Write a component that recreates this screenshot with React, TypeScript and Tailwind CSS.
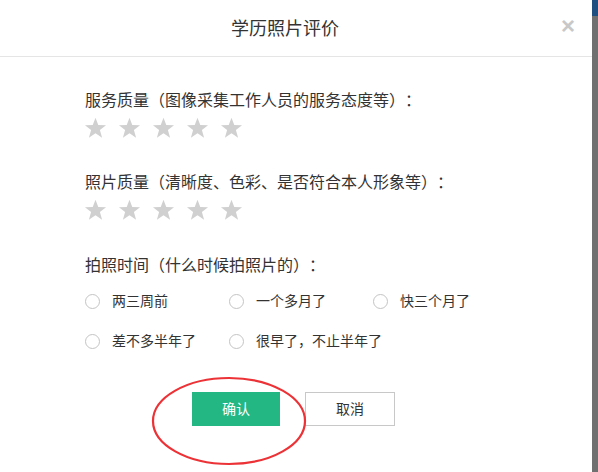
import React from "react";

const font = { fontFamily: '"Liberation Sans", "Noto Sans CJK SC", sans-serif' };

function Star() {
  return (
    <svg width="23" height="22" viewBox="0 0 24 23" className="shrink-0">
      <path d="M12 0.8 L14.9 8.4 L23 8.7 L16.6 13.7 L18.9 21.6 L12 17 L5.1 21.6 L7.4 13.7 L1 8.7 L9.1 8.4 Z" fill="#d0d0d0" />
    </svg>
  );
}

function Stars() {
  return (
    <div className="flex gap-[11px] mt-[6px] ml-[-1px] h-[22px]">
      <Star />
      <Star />
      <Star />
      <Star />
      <Star />
    </div>
  );
}

function Radio({ label }: { label: string }) {
  return (
    <div className="flex items-center w-[144px] shrink-0">
      <span className="w-[15px] h-[15px] rounded-full border border-[#c4c4c4] bg-white shrink-0" />
      <span className="ml-[12px] text-[14px] text-[#333] whitespace-nowrap">{label}</span>
    </div>
  );
}

export default function App() {
  return (
    <div className="w-[598px] h-[472px] flex bg-white overflow-hidden [text-spacing-trim:space-all]" style={font}>
      <div className="relative w-[592px] h-full bg-white">
        <div className="relative h-[57px] border-b border-[#e5e5e5] flex items-center">
          <div className="w-full pl-[231px] text-[18px] text-[#333] leading-none pt-[2px]">学历照片评价</div>
          <span className="absolute right-[17px] top-[14px] text-[24px] text-[#c8c8c8] leading-none font-bold">×</span>
        </div>
        <div className="pl-[85px] pt-[34px]">
          <div className="text-[16px] text-[#333] leading-[20px]">服务质量（图像采集工作人员的服务态度等）：</div>
          <Stars />
          <div className="text-[16px] text-[#333] leading-[20px] mt-[34px]">照片质量（清晰度、色彩、是否符合本人形象等）：</div>
          <Stars />
          <div className="text-[16px] text-[#333] leading-[20px] mt-[35px]">拍照时间（什么时候拍照片的）：</div>
          <div className="flex flex-col gap-[22px] mt-[16px] ml-[0px]">
            <div className="flex h-[18px] items-center">
              <Radio label="两三周前" />
              <Radio label="一个多月了" />
              <Radio label="快三个月了" />
            </div>
            <div className="flex h-[18px] items-center">
              <Radio label="差不多半年了" />
              <Radio label="很早了，不止半年了" />
            </div>
          </div>
        </div>
        <div className="flex mt-[42px] pl-[192px] gap-[25px]">
          <button className="w-[88px] h-[34px] bg-[#23b784] text-white text-[14px]">确认</button>
          <button className="w-[90px] h-[34px] border border-[#c8c8c8] bg-white text-[#333] text-[14px]">取消</button>
        </div>
        <svg className="absolute left-[150px] top-[374px] pointer-events-none" width="160" height="94" viewBox="0 0 160 94">
          <ellipse cx="79" cy="47" rx="76" ry="43" fill="none" stroke="#ec3236" strokeWidth="2.2" />
        </svg>
      </div>
      <div className="w-[6px] h-full bg-[#707070] relative">
        <div className="absolute top-0 left-0 w-full h-[16px] bg-[#1f4f80]" />
      </div>
    </div>
  );
}
